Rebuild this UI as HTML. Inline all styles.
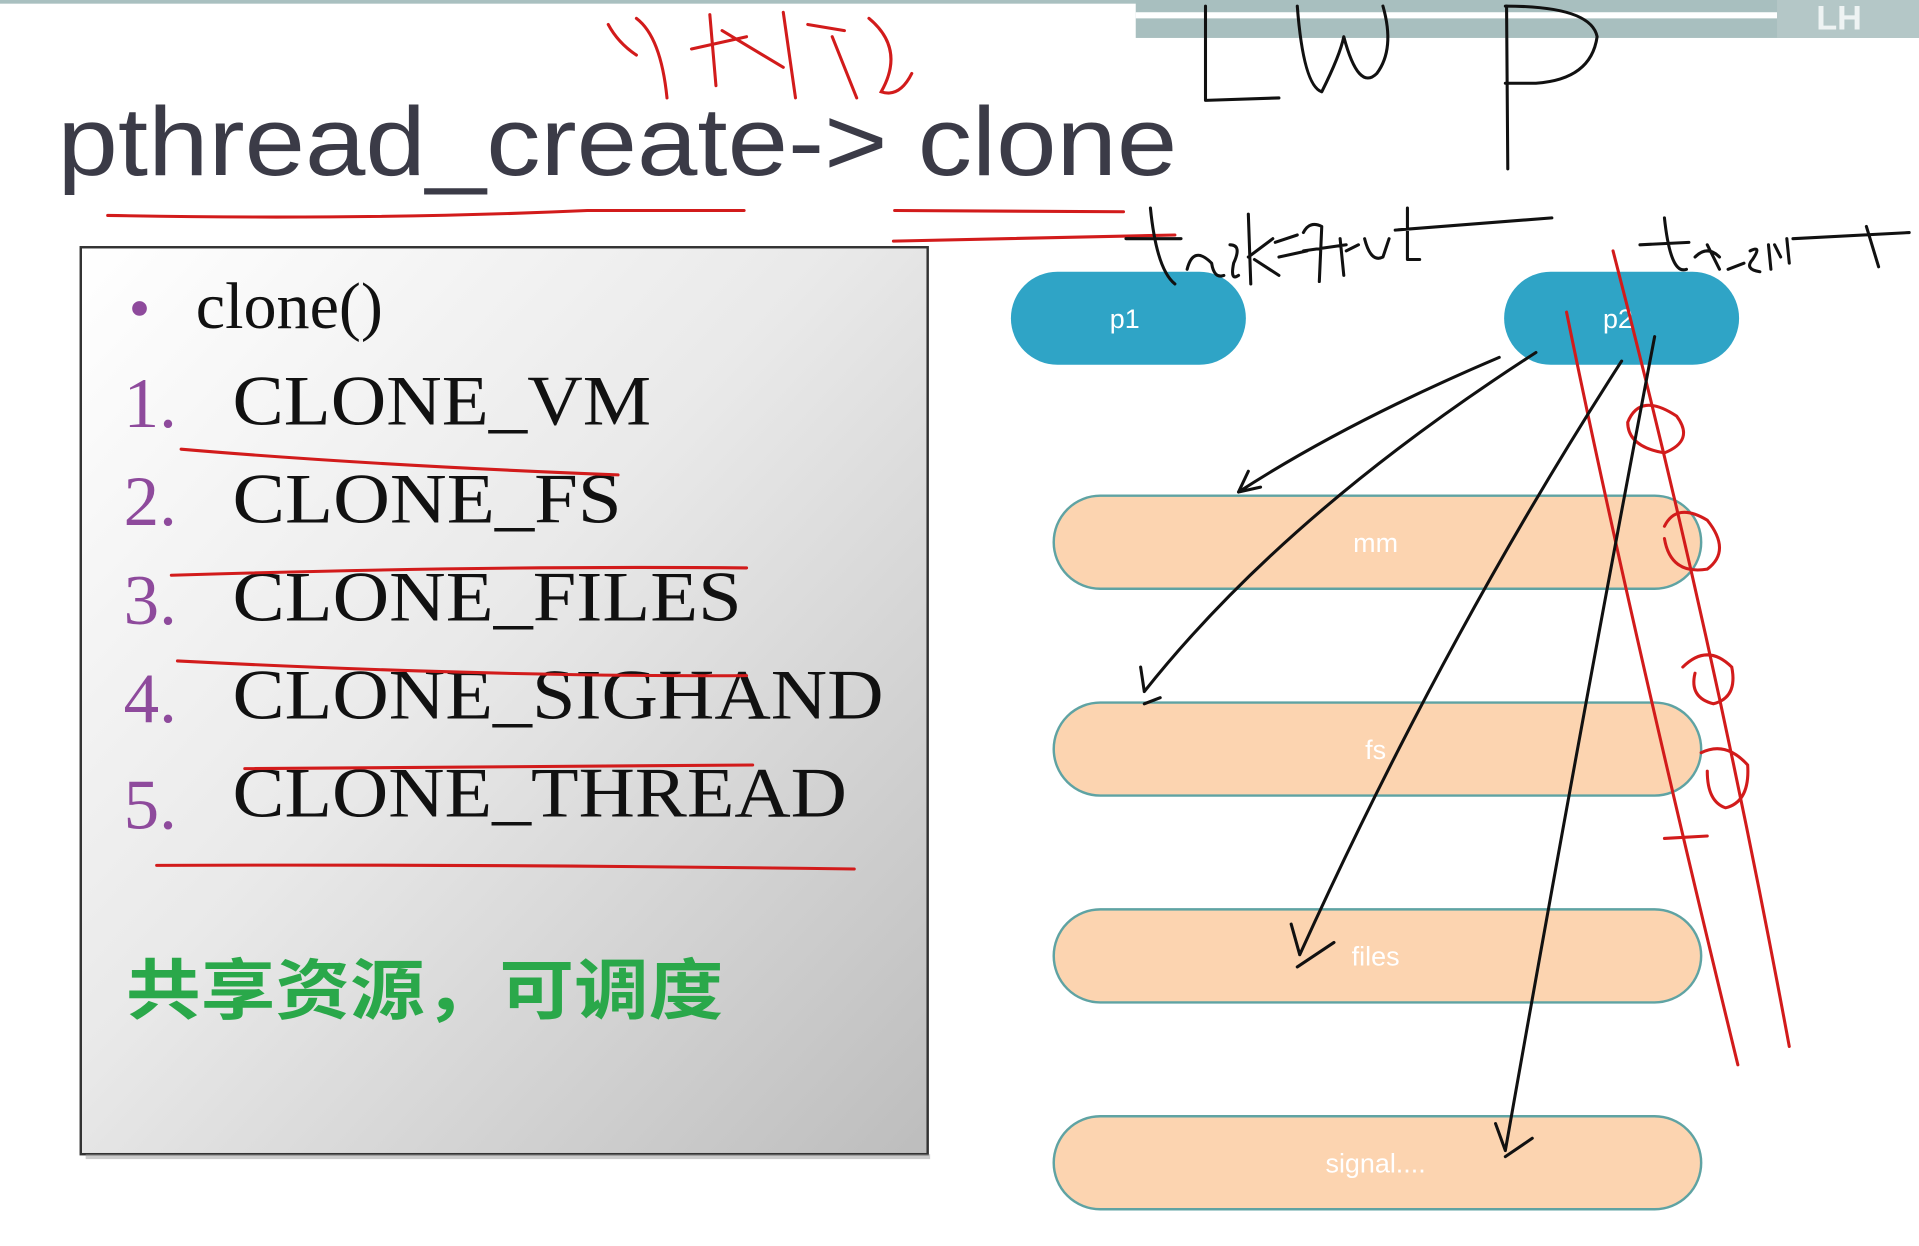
<!DOCTYPE html>
<html><head><meta charset="utf-8"><style>
html,body{margin:0;padding:0;background:#fff;overflow:hidden}
svg{display:block}
</style></head><body>
<svg width="1919" height="1246" viewBox="0 0 1568 1018" preserveAspectRatio="none" xmlns="http://www.w3.org/2000/svg">
<defs>
<linearGradient id="g" x1="0" y1="0" x2="1" y2="1">
<stop offset="0" stop-color="#ffffff"/><stop offset="0.45" stop-color="#e9e9e9"/><stop offset="1" stop-color="#bdbdbd"/>
</linearGradient>
</defs>
<rect width="1568" height="1018" fill="#fff"/>
<!-- top bar -->
<rect x="0" y="0" width="1568" height="3" fill="#a9c0c0"/>
<rect x="928" y="0" width="640" height="31" fill="#a8bfbf"/>
<rect x="928" y="10" width="524" height="5" fill="#ffffff"/>
<rect x="1452" y="0" width="116" height="31" fill="#b4c7c7"/>
<text x="1484" y="24" font-family="Liberation Sans, sans-serif" font-size="28" font-weight="bold" fill="#eef3f3">LH</text>
<!-- title -->
<text x="47" y="143" font-family="Liberation Sans, sans-serif" font-size="80" fill="#3b3b47" textLength="915" lengthAdjust="spacingAndGlyphs">pthread_create-&gt; clone</text>
<!-- box -->
<rect x="66" y="202" width="692" height="741" fill="url(#g)" stroke="#333" stroke-width="2"/>
<rect x="70" y="943" width="690" height="4" fill="#999" opacity="0.5"/>
<circle cx="114" cy="252" r="6" fill="#8e4a9c"/>
<text x="160" y="268" font-family="Liberation Serif, serif" font-size="54" fill="#111">clone()</text>
<g font-family="Liberation Serif, serif" font-size="58">
<g fill="#8e4a9c">
<text x="101" y="349">1.</text><text x="101" y="429">2.</text><text x="101" y="510">3.</text><text x="101" y="590">4.</text><text x="101" y="677">5.</text>
</g>
<g fill="#111">
<text x="190" y="347" textLength="342" lengthAdjust="spacingAndGlyphs">CLONE_VM</text>
<text x="190" y="427" textLength="318" lengthAdjust="spacingAndGlyphs">CLONE_FS</text>
<text x="190" y="507" textLength="416" lengthAdjust="spacingAndGlyphs">CLONE_FILES</text>
<text x="190" y="587" textLength="532" lengthAdjust="spacingAndGlyphs">CLONE_SIGHAND</text>
<text x="190" y="667" textLength="502" lengthAdjust="spacingAndGlyphs">CLONE_THREAD</text>
</g></g>
<text x="103" y="828" font-family="Liberation Sans, 'Noto Sans CJK SC', sans-serif" font-size="54" font-weight="bold" fill="#2aa84a" textLength="488" lengthAdjust="spacingAndGlyphs">共享资源，可调度</text>
<!-- pills -->
<rect x="826" y="222" width="192" height="76" rx="38" fill="#2fa4c6"/>
<rect x="1229" y="222" width="192" height="76" rx="38" fill="#2fa4c6"/>
<g font-family="Liberation Sans, sans-serif" font-size="22" fill="#fff" text-anchor="middle">
<text x="919" y="268">p1</text><text x="1322" y="268">p2</text>
</g>
<g fill="#fcd4b0" stroke="#5fa3a3" stroke-width="2">
<rect x="861" y="405" width="529" height="76" rx="38"/>
<rect x="861" y="574" width="529" height="76" rx="38"/>
<rect x="861" y="743" width="529" height="76" rx="38"/>
<rect x="861" y="912" width="529" height="76" rx="38"/>
</g>
<g font-family="Liberation Sans, sans-serif" font-size="22" fill="#fff" text-anchor="middle">
<text x="1124" y="451">mm</text><text x="1124" y="620">fs</text><text x="1124" y="789">files</text><text x="1124" y="958">signal....</text>
</g>
<!-- red handwriting -->
<g fill="none" stroke="#d21b1b" stroke-width="2.5" stroke-linecap="round">
<path d="M497 20 Q505 35 520 45 M520 15 Q540 30 545 80 M580 12 L585 70 M565 40 L610 30 M590 25 L640 55 M640 10 L650 80 M660 20 L690 25 M680 30 L700 80 M710 15 Q740 40 720 75 Q735 80 745 60"/>
<path d="M88 176 Q300 180 480 172 L608 172"/>
<path d="M731 172 L918 173 M730 197 L960 192"/>
<path d="M148 367 Q300 380 505 388"/>
<path d="M140 470 Q400 462 610 464"/>
<path d="M145 540 Q400 553 610 552"/>
<path d="M200 628 L615 625"/>
<path d="M128 707 Q400 706 698 710"/>
<path d="M1280 255 Q1330 500 1420 870"/>
<path d="M1318 205 Q1400 520 1462 855"/>
<path d="M1330 345 Q1340 320 1370 340 Q1385 360 1360 370 Q1330 365 1330 345"/>
<path d="M1360 430 Q1370 410 1395 425 Q1415 450 1395 465 Q1365 470 1360 440"/>
<path d="M1375 545 Q1395 525 1415 545 Q1420 570 1400 575 Q1380 570 1385 550"/>
<path d="M1390 615 Q1410 605 1428 625 Q1430 655 1410 660 Q1395 655 1395 630"/>
<path d="M1360 685 L1395 683"/>
</g>
<!-- black handwriting -->
<g fill="none" stroke="#111" stroke-width="2.5" stroke-linecap="round" stroke-linejoin="round">
<path d="M985 5 L985 82 L1045 80"/>
<path d="M1060 5 Q1065 70 1080 75 Q1095 45 1098 30 Q1110 75 1125 60 Q1140 40 1130 5"/>
<path d="M1230 5 Q1300 5 1305 30 Q1300 65 1255 68 L1230 68"/>
<path d="M1231 5 L1232 138"/>
<path d="M920 195 L965 195 M940 170 Q945 220 960 232 M970 220 Q975 200 990 215 Q992 228 1000 225 M1005 200 Q1015 200 1008 215 Q1005 230 1012 225 M1020 175 L1022 232 M1020 210 L1040 195 M1025 212 L1045 225 M1042 198 L1060 192 M1045 210 L1068 205 M1065 190 Q1070 180 1080 185 L1078 230 M1065 205 L1100 200 M1095 195 L1098 225 M1100 205 L1110 200 M1115 195 Q1120 215 1130 210 L1135 195 M1150 170 L1150 212 L1160 212 M1140 188 L1268 178"/>
<path d="M1340 200 L1380 198 M1360 178 Q1365 225 1378 220 M1385 210 Q1395 200 1405 210 M1395 200 L1405 220 M1412 220 L1425 215 M1430 205 Q1440 200 1432 212 Q1425 220 1438 222 M1445 200 L1447 220 M1450 200 L1455 210 M1460 195 L1462 215 M1465 195 L1560 190 M1525 185 L1535 218"/>
<path d="M1225 292 Q1100 345 1012 402 M1012 402 L1020 385 M1012 402 L1030 398"/>
<path d="M1255 288 Q1050 420 935 565 M935 565 L932 545 M935 575 L948 570"/>
<path d="M1325 295 Q1180 520 1062 780 M1062 780 L1055 755 M1060 790 L1090 770"/>
<path d="M1352 275 Q1290 600 1230 940 M1230 940 L1222 918 M1230 945 L1252 930"/>
</g>
</svg>
</body></html>
